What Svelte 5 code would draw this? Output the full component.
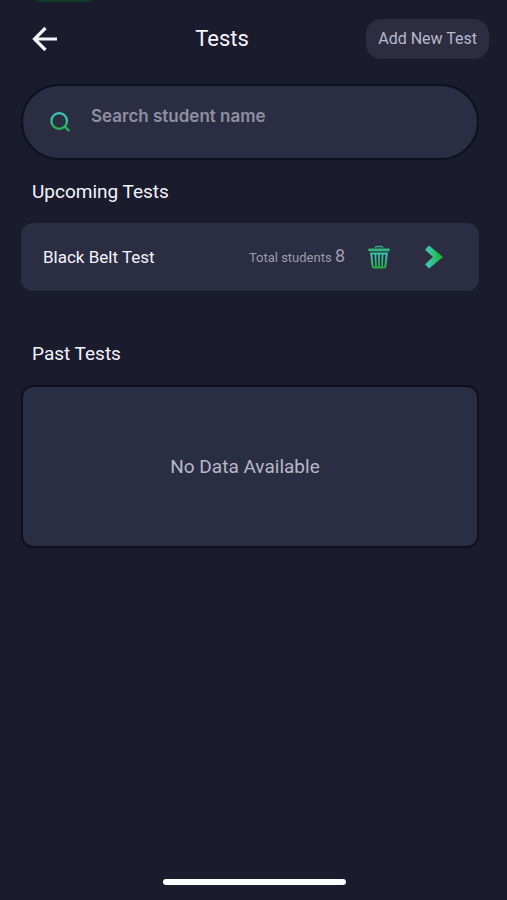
<script>
  let query = $state('');
  const upcoming = [{ name: 'Black Belt Test', students: 8 }];
  const past = [];
</script>

<svelte:head><title>Tests</title></svelte:head>

<div class="screen">
  <div class="status"></div>

  <header>
    <button class="back" aria-label="Back">
      <svg width="26" height="26" viewBox="0 0 26 26" fill="none" stroke="#f4f3fc" stroke-width="3.2">
        <path d="M25 13H3M13.5 2L2.5 13l11 11" />
      </svg>
    </button>
    <h1>Tests</h1>
    <button class="add">Add New Test</button>
  </header>

  <main>
    <label class="search">
      <svg width="20" height="20" viewBox="0 0 20 20" fill="none" stroke="url(#search-fill)" stroke-width="2.3" stroke-linecap="round">
        <defs>
          <linearGradient id="search-fill" x1="0" y1="0" x2="0" y2="20" gradientUnits="userSpaceOnUse">
            <stop offset="0" stop-color="#3cc8c4" />
            <stop offset="1" stop-color="#25ad45" />
          </linearGradient>
        </defs>
        <circle cx="9.2" cy="9" r="7.8" />
        <path d="M14.6 14.4l4 4" />
      </svg>
      <input type="text" placeholder="Search student name" aria-label="Search student name" bind:value={query} />
    </label>

    <section>
      <h2>Upcoming Tests</h2>
      {#each upcoming as test}
        <article class="test">
          <h3>{test.name}</h3>
          <p>Total students <span>{test.students}</span></p>
          <button aria-label="Delete test">
            <svg width="22" height="24" viewBox="0 0 22 24">
              <defs>
                <linearGradient id="bin-fill" x1="0" y1="0" x2="0" y2="24" gradientUnits="userSpaceOnUse">
                  <stop offset="0" stop-color="#35a5a0" />
                  <stop offset="0.2" stop-color="#2fb578" />
                  <stop offset="0.4" stop-color="#3cc5ae" />
                  <stop offset="1" stop-color="#20ad3c" />
                </linearGradient>
              </defs>
              <g fill="none" stroke="url(#bin-fill)">
                <path d="M7 2.700C7.400 1.700 8 1.500 9 1.500h4c1 0 1.600.2 2 1.200" stroke-width="1.300" />
                <path d="M1.400 4.900h19.200" stroke-width="2.600" stroke-linecap="round" />
                <path d="M3.200 8.500h15.600l-1.400 12.600c-.1.900-.5 1.300-1.300 1.300H5.900c-.8 0-1.200-.4-1.300-1.300z" stroke-width="2" />
                <path d="M7.400 8.500l.6 13.500M11 8.500v13.500M14.600 8.500L14 22" stroke-width="1.700" />
              </g>
            </svg>
          </button>
          <button aria-label="Open test">
            <svg width="20" height="24" viewBox="0 0 20 24">
              <defs>
                <linearGradient id="arrow-fill" x1="0" y1="0" x2="1" y2="0">
                  <stop offset="0.2" stop-color="#3bc7aa" />
                  <stop offset="0.8" stop-color="#22b844" />
                </linearGradient>
              </defs>
              <path d="M5 0.500L19 12 5 23.500 1 19.300 9 12 1 4.700z" fill="url(#arrow-fill)" />
            </svg>
          </button>
        </article>
      {/each}
    </section>

    <section>
      <h2>Past Tests</h2>
      {#if past.length === 0}
        <div class="empty"><p>No Data Available</p></div>
      {/if}
    </section>
  </main>

  <div class="home"></div>
</div>

<style>
  :global(body) {
    margin: 0;
    background: #1a1b2c;
  }
  .screen {
    box-sizing: border-box;
    min-height: 100vh;
    display: flex;
    flex-direction: column;
    background: #1a1b2c;
    color: #f4f3fc;
    font-family: Roboto, sans-serif;
  }
  h1, h2, h3, p {
    margin: 0;
    font-weight: 400;
  }
  button {
    border: 0;
    padding: 0;
    background: none;
    font: inherit;
    color: inherit;
    cursor: pointer;
  }
  svg {
    display: block;
  }
  .status {
    width: 56px;
    height: 2px;
    margin-left: 36px;
    border-radius: 0 0 4px 4px;
    background: #103c27;
  }
  header {
    display: flex;
    align-items: center;
    justify-content: space-between;
    padding: 17px 18px 0 32px;
  }
  .back {
    width: 46px;
  }
  h1 {
    font-size: 22px;
    line-height: 26px;
  }
  .add {
    height: 40px;
    padding: 0 12px 2px;
    border-radius: 15px;
    background: #2c2d41;
    color: #b9b8ca;
    font-size: 16px;
  }
  main {
    flex: 1;
    display: flex;
    flex-direction: column;
    padding: 25px 28px 0 21px;
  }
  .search {
    display: flex;
    align-items: center;
    gap: 21px;
    height: 72px;
    padding: 0 28px 0 27px;
    border: 2px solid #0e0f20;
    border-radius: 38px;
    background: #2b2e43;
  }
  .search input {
    flex: 1;
    min-width: 0;
    height: 24px;
    padding: 0;
    margin-bottom: 12px;
    border: 0;
    outline: 0;
    background: none;
    color: #f4f3fc;
    font: 600 17px/24px Inter, sans-serif;
  }
  .search input::placeholder {
    color: #8f8fa1;
    opacity: 1;
  }
  h2 {
    padding: 0 11px;
    font-size: 19px;
    line-height: 24px;
  }
  section {
    display: flex;
    flex-direction: column;
    gap: 19px;
    padding-top: 20px;
  }
  section + section {
    padding-top: 51px;
  }
  .test {
    display: flex;
    align-items: center;
    height: 68px;
    padding: 0 35px 0 22px;
    border-radius: 12px;
    background: #2b2d42;
  }
  .test h3 {
    flex: 1;
    font-size: 17px;
    line-height: 24px;
  }
  .test p {
    color: #9b9aad;
    font-size: 13px;
    line-height: 24px;
  }
  .test p span {
    font-size: 18px;
  }
  .test button {
    margin-left: 23px;
  }
  .test button + button {
    margin-left: 34px;
  }
  .empty {
    display: grid;
    place-items: center;
    height: 159px;
    padding-right: 10px;
    border: 2px solid #0e0f20;
    border-radius: 12px;
    background: #2a2e43;
    color: #b8b7c9;
    font-size: 19px;
  }
  .home {
    width: 36%;
    height: 6px;
    margin: 24px 0 15px 163px;
    border-radius: 3px;
    background: #fff;
  }
</style>
